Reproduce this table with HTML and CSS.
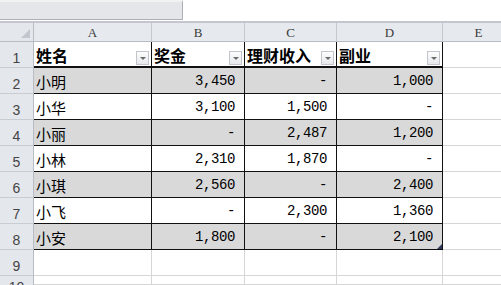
FILE: index.html
```html
<!DOCTYPE html>
<html lang="zh">
<head>
<meta charset="utf-8">
<link rel="stylesheet" href="styles.css">
</head>
<body>
<div class="top"><div class="namebox"></div></div>
<div class="sheet">
  <div class="corner"><span class="corner-tri"></span></div>
  <div class="ch">A</div><div class="ch">B</div><div class="ch">C</div><div class="ch">D</div><div class="ch">E</div>

  <div class="rh">1</div>
  <div class="cell t hd"><span>姓名</span><span class="fb"></span></div>
  <div class="cell t hd"><span>奖金</span><span class="fb"></span></div>
  <div class="cell t hd"><span>理财收入</span><span class="fb"></span></div>
  <div class="cell t hd"><span>副业</span><span class="fb"></span></div>
  <div class="cell"></div>

  <div class="rh">2</div>
  <div class="cell t g nm">小明</div><div class="cell t g n">3,450</div><div class="cell t g n">-</div><div class="cell t g n">1,000</div><div class="cell"></div>

  <div class="rh">3</div>
  <div class="cell t nm">小华</div><div class="cell t n">3,100</div><div class="cell t n">1,500</div><div class="cell t n">-</div><div class="cell"></div>

  <div class="rh">4</div>
  <div class="cell t g nm">小丽</div><div class="cell t g n">-</div><div class="cell t g n">2,487</div><div class="cell t g n">1,200</div><div class="cell"></div>

  <div class="rh">5</div>
  <div class="cell t nm">小林</div><div class="cell t n">2,310</div><div class="cell t n">1,870</div><div class="cell t n">-</div><div class="cell"></div>

  <div class="rh">6</div>
  <div class="cell t g nm">小琪</div><div class="cell t g n">2,560</div><div class="cell t g n">-</div><div class="cell t g n">2,400</div><div class="cell"></div>

  <div class="rh">7</div>
  <div class="cell t nm">小飞</div><div class="cell t n">-</div><div class="cell t n">2,300</div><div class="cell t n">1,360</div><div class="cell"></div>

  <div class="rh">8</div>
  <div class="cell t g nm">小安</div><div class="cell t g n">1,800</div><div class="cell t g n">-</div><div class="cell t g n last">2,100<span class="handle"></span></div><div class="cell"></div>

  <div class="rh">9</div>
  <div class="cell"></div><div class="cell"></div><div class="cell"></div><div class="cell"></div><div class="cell"></div>

  <div class="rh cut">10</div>
  <div class="cell"></div><div class="cell"></div><div class="cell"></div><div class="cell"></div><div class="cell"></div>
</div>
</body>
</html>
```

FILE: styles.css
```css
html, body {
  margin: 0;
  padding: 0;
  background: #ffffff;
  width: 501px;
  height: 285px;
  overflow: hidden;
}

.top {
  height: 23px;
  box-sizing: border-box;
  border-bottom: 2px solid #c3c7cd;
}

.namebox {
  width: 183px;
  height: 20px;
  box-sizing: border-box;
  background: #e4e6ea;
  border-top: 2px solid #f2f2f2;
  border-right: 1px solid #aab0b8;
  border-bottom: 1px solid #aab0b8;
}

.sheet {
  display: grid;
  width: 515px;
  grid-template-columns: 34px 118px 93px 92px 106px 72px;
  grid-template-rows: 19px repeat(9, 26px) 9px;
}

.sheet > div {
  box-sizing: border-box;
  overflow: hidden;
}

.corner {
  background: #e4e7ec;
  border-right: 1px solid #b8bdc5;
  border-bottom: 1px solid #b8bdc5;
  position: relative;
}

.corner-tri {
  position: absolute;
  right: 3px;
  bottom: 3px;
  width: 0;
  height: 0;
  border-left: 9px solid transparent;
  border-bottom: 9px solid #c3c7cd;
}

.ch {
  background: #e6e9ed;
  border-right: 1px solid #c5c9cf;
  border-bottom: 1px solid #b8bdc5;
  font-family: "Liberation Serif", serif;
  font-size: 13px;
  color: #3a3a3a;
  display: flex;
  align-items: center;
  justify-content: center;
  line-height: 1;
  padding-top: 1px;
}

.rh {
  background: #e4e7ec;
  border-right: 1px solid #b8bdc5;
  border-bottom: 1px solid #c9cdd3;
  font-family: "Liberation Sans", sans-serif;
  font-size: 14px;
  color: #444;
  display: flex;
  align-items: flex-end;
  justify-content: center;
  padding-bottom: 1px;
  line-height: 16px;
}

.rh.cut {
  align-items: flex-start;
  padding-top: 5px;
  padding-bottom: 0;
  line-height: 12px;
  border-bottom: 0;
}

.cell {
  border-right: 1px solid #d6d6d6;
  border-bottom: 1px solid #d6d6d6;
  display: flex;
  align-items: flex-end;
  font-family: "Noto Sans CJK SC", sans-serif;
  font-size: 15px;
  line-height: 18px;
  color: #000;
  padding-bottom: 2px;
}

.cell.t {
  border-right-color: #111;
  border-bottom-color: #111;
}

.cell.g {
  background: #d9d9d9;
}

.cell.hd {
  font-weight: 700;
  font-size: 16px;
  justify-content: space-between;
  align-items: flex-end;
  padding-left: 2px;
  padding-right: 2px;
  padding-bottom: 1px;
  border-bottom-width: 2px;
  background: #ffffff;
}

.cell.hd > span:first-child {
  padding-bottom: 1px;
}

.fb {
  width: 13px;
  height: 14px;
  box-sizing: border-box;
  border: 1px solid #c2c6cc;
  background: linear-gradient(#fdfdfd, #e6e8eb);
  display: flex;
  align-items: center;
  justify-content: center;
}

.fb::after {
  content: "";
  width: 0;
  height: 0;
  border-left: 3px solid transparent;
  border-right: 3px solid transparent;
  border-top: 3px solid #6a6a6a;
  margin-top: 1px;
}

.cell.nm {
  padding-left: 2px;
}

.cell.n {
  justify-content: flex-end;
  padding-right: 9px;
  font-family: "Liberation Mono", monospace;
  font-size: 14px;
  letter-spacing: -0.4px;
  padding-bottom: 3px;
}

.cell.last {
  position: relative;
}

.handle {
  position: absolute;
  right: 0;
  bottom: 0;
  width: 0;
  height: 0;
  border-left: 5px solid transparent;
  border-bottom: 5px solid #2f3b5c;
}
```
